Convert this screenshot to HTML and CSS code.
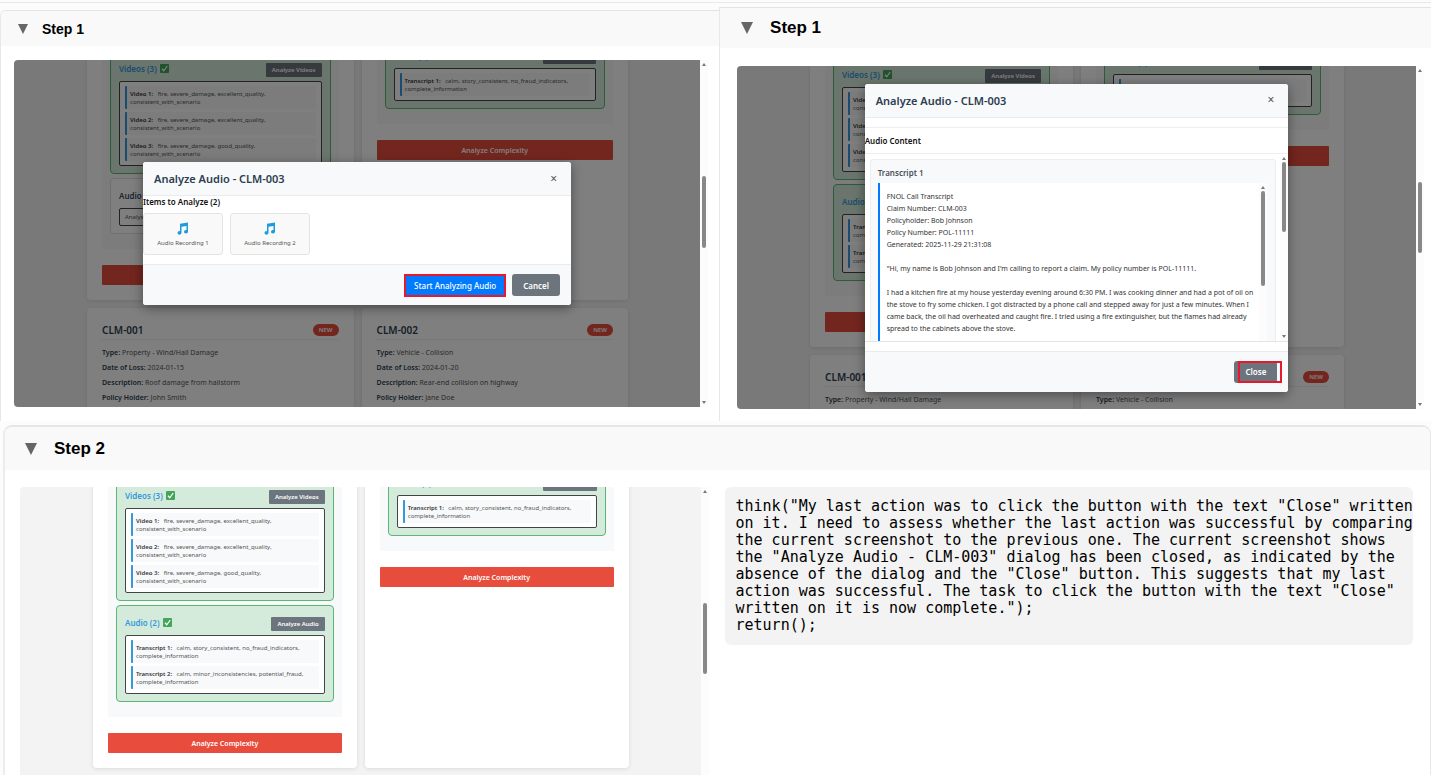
FILE: index.html
```html
<!DOCTYPE html>
<html lang="en">
<head>
<meta charset="utf-8">
<title>Agent Steps</title>
<link rel="stylesheet" href="styles.css">
</head>
<body>
<svg class="defs" width="0" height="0" aria-hidden="true">
  <symbol id="check" viewBox="0 0 18 18">
    <rect width="18" height="18" rx="2" fill="#43a55a"/>
    <path d="M4 9.5l3.5 4L14.5 4" fill="none" stroke="#fff" stroke-width="2.4"/>
  </symbol>
  <symbol id="note" viewBox="0 0 24 26">
    <path d="M7 3.5L23 1v18.500a4 3.500 0 1 1-3-3.300V8L10 9.500v12.200a4 3.500 0 1 1-3-3.300z" fill="#1e9bdc"/>
  </symbol>
  <symbol id="toggle" viewBox="0 0 12 12">
    <path d="M0 0h12L6 12z" fill="#666"/>
  </symbol>
  <symbol id="up" viewBox="0 0 4 3"><path d="M0 3h4L2 0z" fill="#777"/></symbol>
  <symbol id="down" viewBox="0 0 4 3"><path d="M0 0h4L2 3z" fill="#777"/></symbol>
</svg>

<div class="top-row">
  <section class="step step-small">
    <h2 class="step-title"><svg><use href="#toggle"/></svg>Step 1</h2>
    <div class="shot">
      <div class="page">
        <div class="claims">
          <div class="claim">
            <div class="evidence evidence-first">
              <div class="group done">
                <div class="group-head"><h4>Videos (3) <svg><use href="#check"/></svg></h4><button>Analyze Videos</button></div>
                <div class="tags">
                  <p><b>Video 1:</b> fire, severe_damage, excellent_quality, consistent_with_scenario</p>
                  <p><b>Video 2:</b> fire, severe_damage, excellent_quality, consistent_with_scenario</p>
                  <p><b>Video 3:</b> fire, severe_damage, good_quality, consistent_with_scenario</p>
                </div>
              </div>
              <div class="group">
                <div class="group-head"><h4>Audio (2)</h4><button>Analyze Audio</button></div>
                <div class="pending">Analysis pending</div>
              </div>
            </div>
            <button class="complexity">Analyze Complexity</button>
          </div>
          <div class="claim">
            <div class="evidence">
              <div class="group done">
                <div class="group-head"><h4>Audio (1) <svg><use href="#check"/></svg></h4><button>Analyze Audio</button></div>
                <div class="tags">
                  <p><b>Transcript 1:</b> calm, story_consistent, no_fraud_indicators, complete_information</p>
                </div>
              </div>
            </div>
            <button class="complexity">Analyze Complexity</button>
          </div>
          <div class="claim">
            <div class="claim-head"><h3>CLM-001</h3><span class="badge">NEW</span></div>
            <p class="field"><b>Type:</b> Property - Wind/Hail Damage</p>
            <p class="field"><b>Date of Loss:</b> 2024-01-15</p>
            <p class="field"><b>Description:</b> Roof damage from hailstorm</p>
            <p class="field"><b>Policy Holder:</b> John Smith</p>
          </div>
          <div class="claim">
            <div class="claim-head"><h3>CLM-002</h3><span class="badge">NEW</span></div>
            <p class="field"><b>Type:</b> Vehicle - Collision</p>
            <p class="field"><b>Date of Loss:</b> 2024-01-20</p>
            <p class="field"><b>Description:</b> Rear-end collision on highway</p>
            <p class="field"><b>Policy Holder:</b> Jane Doe</p>
          </div>
        </div>
        <div class="overlay">
          <div class="modal">
            <div class="modal-head"><h3>Analyze Audio - CLM-003</h3><button class="close" aria-label="Close dialog">×</button></div>
            <div class="items-body">
              <h4>Items to Analyze (2)</h4>
              <div class="items">
                <div class="item"><svg><use href="#note"/></svg>Audio Recording 1</div>
                <div class="item"><svg><use href="#note"/></svg>Audio Recording 2</div>
              </div>
            </div>
            <div class="modal-foot">
              <span class="target"><button class="btn primary">Start Analyzing Audio</button><i class="marker"></i></span>
              <button class="btn">Cancel</button>
            </div>
          </div>
        </div>
      </div>
      <div class="scrollbar"><svg><use href="#up"/></svg><i class="thumb"></i><svg><use href="#down"/></svg></div>
    </div>
  </section>

  <section class="step step-right">
    <h2 class="step-title"><svg><use href="#toggle"/></svg>Step 1</h2>
    <div class="shot">
      <div class="page">
        <div class="claims">
          <div class="claim">
            <div class="evidence evidence-first">
              <div class="group done">
                <div class="group-head"><h4>Videos (3) <svg><use href="#check"/></svg></h4><button>Analyze Videos</button></div>
                <div class="tags">
                  <p><b>Video 1:</b> fire, severe_damage, excellent_quality, consistent_with_scenario</p>
                  <p><b>Video 2:</b> fire, severe_damage, excellent_quality, consistent_with_scenario</p>
                  <p><b>Video 3:</b> fire, severe_damage, good_quality, consistent_with_scenario</p>
                </div>
              </div>
              <div class="group done">
                <div class="group-head"><h4>Audio (2) <svg><use href="#check"/></svg></h4><button>Analyze Audio</button></div>
                <div class="tags">
                  <p><b>Transcript 1:</b> calm, story_consistent, no_fraud_indicators, complete_information</p>
                  <p><b>Transcript 2:</b> calm, minor_inconsistencies, potential_fraud, complete_information</p>
                </div>
              </div>
            </div>
            <button class="complexity">Analyze Complexity</button>
          </div>
          <div class="claim">
            <div class="evidence">
              <div class="group done">
                <div class="group-head"><h4>Audio (1) <svg><use href="#check"/></svg></h4><button>Analyze Audio</button></div>
                <div class="tags">
                  <p><b>Transcript 1:</b> calm, story_consistent, no_fraud_indicators, complete_information</p>
                </div>
              </div>
            </div>
            <button class="complexity">Analyze Complexity</button>
          </div>
          <div class="claim">
            <div class="claim-head"><h3>CLM-001</h3><span class="badge">NEW</span></div>
            <p class="field"><b>Type:</b> Property - Wind/Hail Damage</p>
            <p class="field"><b>Date of Loss:</b> 2024-01-15</p>
          </div>
          <div class="claim">
            <div class="claim-head"><h3>CLM-002</h3><span class="badge">NEW</span></div>
            <p class="field"><b>Type:</b> Vehicle - Collision</p>
            <p class="field"><b>Date of Loss:</b> 2024-01-20</p>
          </div>
        </div>
        <div class="overlay">
          <div class="modal">
            <div class="modal-head"><h3>Analyze Audio - CLM-003</h3><button class="close" aria-label="Close dialog">×</button></div>
            <div class="content-body">
              <h4>Audio Content</h4>
              <div class="scroller">
                <div class="transcript">
                  <h5>Transcript 1</h5>
                  <div class="transcript-box">
                    <div class="transcript-text">FNOL Call Transcript
Claim Number: CLM-003
Policyholder: Bob Johnson
Policy Number: POL-11111
Generated: 2025-11-29 21:31:08

"Hi, my name is Bob Johnson and I'm calling to report a claim. My policy number is POL-11111.

I had a kitchen fire at my house yesterday evening around 6:30 PM. I was cooking dinner and had a pot of oil on
the stove to fry some chicken. I got distracted by a phone call and stepped away for just a few minutes. When I
came back, the oil had overheated and caught fire. I tried using a fire extinguisher, but the flames had already
spread to the cabinets above the stove.</div>
                    <div class="scrollbar inner"><svg><use href="#up"/></svg><i class="thumb"></i></div>
                  </div>
                </div>
                <div class="scrollbar outer"><svg><use href="#up"/></svg><i class="thumb"></i><svg><use href="#down"/></svg></div>
              </div>
            </div>
            <div class="modal-foot">
              <span class="target"><button class="btn">Close</button><i class="marker marker-shifted"></i></span>
            </div>
          </div>
        </div>
      </div>
      <div class="scrollbar"><svg><use href="#up"/></svg><i class="thumb"></i><svg><use href="#down"/></svg></div>
    </div>
  </section>
</div>

<section class="step step-wide">
  <h2 class="step-title"><svg><use href="#toggle"/></svg>Step 2</h2>
  <div class="columns">
    <div class="shot">
      <div class="page">
        <div class="claims">
          <div class="claim">
            <div class="evidence evidence-first">
              <div class="group done">
                <div class="group-head"><h4>Videos (3) <svg><use href="#check"/></svg></h4><button>Analyze Videos</button></div>
                <div class="tags">
                  <p><b>Video 1:</b> fire, severe_damage, excellent_quality, consistent_with_scenario</p>
                  <p><b>Video 2:</b> fire, severe_damage, excellent_quality, consistent_with_scenario</p>
                  <p><b>Video 3:</b> fire, severe_damage, good_quality, consistent_with_scenario</p>
                </div>
              </div>
              <div class="group done">
                <div class="group-head"><h4>Audio (2) <svg><use href="#check"/></svg></h4><button>Analyze Audio</button></div>
                <div class="tags">
                  <p><b>Transcript 1:</b> calm, story_consistent, no_fraud_indicators, complete_information</p>
                  <p><b>Transcript 2:</b> calm, minor_inconsistencies, potential_fraud, complete_information</p>
                </div>
              </div>
            </div>
            <button class="complexity">Analyze Complexity</button>
          </div>
          <div class="claim">
            <div class="evidence">
              <div class="group done">
                <div class="group-head"><h4>Audio (1) <svg><use href="#check"/></svg></h4><button>Analyze Audio</button></div>
                <div class="tags">
                  <p><b>Transcript 1:</b> calm, story_consistent, no_fraud_indicators, complete_information</p>
                </div>
              </div>
            </div>
            <button class="complexity">Analyze Complexity</button>
          </div>
        </div>
      </div>
      <div class="scrollbar"><svg><use href="#up"/></svg><i class="thumb"></i><svg><use href="#down"/></svg></div>
    </div>
    <pre class="code">think("My last action was to click the button with the text "Close" written
on it. I need to assess whether the last action was successful by comparing
the current screenshot to the previous one. The current screenshot shows
the "Analyze Audio - CLM-003" dialog has been closed, as indicated by the
absence of the dialog and the "Close" button. This suggests that my last
action was successful. The task to click the button with the text "Close"
written on it is now complete.");
return();</pre>
  </div>
</section>
</body>
</html>
```
FILE: styles.css
```css
* {
    box-sizing: border-box;
}

body {
    display: flex;
    flex-direction: column;
    margin: 0;
    height: 100vh;
    overflow: hidden;
    background-color: #fcfcfc;
    font-family: "Noto Sans", sans-serif;
    color: #222;
}

h2, h3, h4, h5, p, pre {
    margin: 0;
}

button {
    font-family: inherit;
    border: none;
    padding: 0;
    cursor: pointer;
}

.defs {
    display: block;
    flex: none;
}

/* step panels */
.top-row {
    flex: none;
    display: grid;
    grid-template-columns: 1.01fr 1fr;
    margin-top: 2px;
    border-top: 1px solid #e8e8e8;
    padding-top: 4px;
}

.step {
    min-width: 0;
    background-color: #fff;
    border-top: 1px solid #e4e4e4;
    border-left: 1px solid #e8e8e8;
}

.step-title {
    display: flex;
    align-items: center;
    height: 40px;
    padding-left: 20px;
    gap: 17px;
    background-color: #f9f9f9;
    font: bold 17px "Liberation Sans", Arial, sans-serif;
    color: #000;
}

.step-title svg {
    width: 12px;
    height: 12px;
}

.step-small {
    margin-top: 3px;
    border-top-left-radius: 6px;
    overflow: hidden;
}

.step-small .step-title {
    height: 35px;
    padding-left: 17px;
    gap: 14px;
    font-size: 14px;
}

.step-small .step-title svg {
    width: 10px;
    height: 10px;
}

.step-small .shot {
    margin: 14px 11px 14px 13px;
}

.step-right .step-title {
    padding-left: 21px;
}

.step-right .shot {
    margin: 18px 7px 11px 17px;
}

.step-wide {
    flex: 1;
    min-height: 0;
    margin: 4px 0 0 3px;
    border-top: 2px solid #e6e6e6;
    border-left: 2px solid #ececec;
    border-right: 1px solid #e8e8e8;
    border-radius: 9px 9px 0 0;
    overflow: hidden;
}

.step-wide .step-title {
    height: 43px;
}

.columns {
    display: grid;
    grid-template-columns: minmax(0, 1fr) minmax(0, 1fr);
    gap: 16px;
    padding: 17px 17px 17px 15px;
    align-items: start;
}

.code {
    padding: 11px 0 11px 11px;
    border-radius: 6px;
    background-color: #f3f3f3;
    font: 15px/17px "DejaVu Sans Mono", monospace;
    color: #000;
}

/* captured browser window */
.shot {
    display: flex;
    aspect-ratio: 2 / 1;
    min-width: 0;
    border-radius: 4px 0 0 4px;
    overflow: hidden;
}

.page {
    position: relative;
    flex: 1;
    min-width: 0;
    overflow: hidden;
    background-color: #f3f3f3;
}

.scrollbar {
    width: 8px;
    flex: none;
    display: flex;
    flex-direction: column;
    align-items: center;
    padding: 3px 0;
    background-color: #fcfcfc;
}

.scrollbar svg {
    width: 4px;
    height: 3px;
}

.thumb {
    width: 4px;
    height: 21%;
    margin: 110px 0 auto;
    border-radius: 2px;
    background-color: #888;
}

/* claims list, scrolled part of the way down */
.claims {
    display: grid;
    grid-template-columns: 1fr 1fr;
    gap: 8px;
    margin: -37px 72px 0 73px;
}

.claim {
    min-width: 0;
    padding: 15px;
    border-radius: 4px;
    background-color: #fff;
    box-shadow: 0 1px 4px rgba(0, 0, 0, 0.1);
}

.evidence {
    padding: 0 8px 15px;
    background-color: #f8f9fa;
}

.evidence-first {
    padding-top: 13px;
}

.group {
    margin-bottom: 4px;
    padding: 11px 8px 7px;
    border: 1px solid #ddd;
    border-radius: 4px;
    background-color: #fff;
}

.group:last-child {
    margin-bottom: 0;
}

.group.done {
    border-color: #5ab874;
    background-color: #d4ebdb;
}

.group-head {
    display: flex;
    align-items: flex-start;
    justify-content: space-between;
    height: 18px;
}

.group-head h4 {
    display: flex;
    align-items: center;
    gap: 3px;
    font-size: 8px;
    line-height: 11px;
    font-weight: 600;
    color: #34495e;
}

.done h4 {
    color: #3498db;
}

.group-head svg {
    width: 9px;
    height: 9px;
}

.group-head button {
    height: 14px;
    padding: 0 6px;
    border-radius: 1px;
    background-color: #6c757d;
    color: #fff;
    font-size: 6px;
    font-weight: 600;
}

.tags {
    display: flex;
    flex-direction: column;
    gap: 3px;
    padding: 4px 5px;
    border: 1px solid #444;
    border-radius: 2px;
    background-color: #fff;
}

.tags p {
    padding: 4px 3px 3px;
    border-left: 2px solid #3498db;
    border-radius: 1px;
    background-color: #f8f9fa;
    font-size: 6px;
    line-height: 8px;
    color: #555;
}

.tags b {
    margin-right: 3px;
    font-weight: 600;
    color: #333;
}

.pending {
    padding: 4px 5px;
    border: 1px solid #444;
    border-radius: 2px;
    font-size: 6px;
    line-height: 8px;
    color: #555;
}

.complexity {
    display: block;
    width: 100%;
    height: 20px;
    margin-top: 16px;
    border-radius: 1px;
    background-color: #e74c3c;
    color: #fff;
    font-size: 7px;
    font-weight: 600;
}

.claim-head {
    display: flex;
    align-items: center;
    justify-content: space-between;
    height: 17px;
    margin-bottom: 5px;
    padding-bottom: 3px;
    border-bottom: 1px solid #ecf0f1;
}

.claim-head h3 {
    font-size: 10px;
    font-weight: 600;
    color: #2c3e50;
}

.badge {
    padding: 0 6px;
    border-radius: 6px;
    background-color: #e74c3c;
    color: #fff;
    font-size: 6px;
    line-height: 12px;
    font-weight: 600;
}

.field {
    font-size: 7px;
    line-height: 15px;
    color: #555;
}

.field b {
    font-weight: 600;
    color: #2c3e50;
}

/* dialogs */
.overlay {
    position: absolute;
    inset: 0;
    display: flex;
    align-items: center;
    justify-content: center;
    background-color: rgba(0, 0, 0, 0.5);
}

.modal {
    width: 62.4%;
    border-radius: 3px;
    background-color: #fff;
    box-shadow: 0 3px 12px rgba(0, 0, 0, 0.4);
}

.modal-head {
    display: flex;
    align-items: center;
    justify-content: space-between;
    height: 34px;
    padding: 0 14px 0 11px;
    border-bottom: 1px solid #e9ecef;
    border-radius: 3px 3px 0 0;
    background-color: #f8f9fa;
}

.modal-head h3 {
    font-size: 11px;
    font-weight: 600;
    color: #2c3e50;
}

.close {
    background: none;
    color: #555;
    font-size: 12px;
    line-height: 14px;
}

.modal h4 {
    font-size: 8px;
    line-height: 12px;
    font-weight: 600;
    color: #111;
}

.items {
    display: flex;
    gap: 7px;
    padding: 5px 0 9px;
}

.item {
    display: flex;
    flex-direction: column;
    align-items: center;
    gap: 3px;
    width: 80px;
    padding: 8px 0 6px;
    border: 1px solid #e4e4e4;
    border-radius: 3px;
    background-color: #f9f9f9;
    color: #555;
    font-size: 6px;
    line-height: 10px;
}

.item svg {
    width: 13px;
    height: 13px;
}

.modal-foot {
    display: flex;
    justify-content: flex-end;
    gap: 6px;
    padding: 9px 11px;
    border-top: 1px solid #e9ecef;
    border-radius: 0 0 3px 3px;
    background-color: #f8f9fa;
}

.btn {
    display: block;
    height: 22px;
    padding: 0 11px;
    border-radius: 3px;
    background-color: #6c757d;
    color: #fff;
    font-size: 8px;
    font-weight: 600;
}

.primary {
    padding: 0 10px;
    background-color: #007bff;
    font-weight: 500;
}

.target {
    position: relative;
}

.marker {
    position: absolute;
    inset: 0 0 -1px;
    border: 2px solid #e8192c;
}

.marker-shifted {
    inset: 0 -5px 0 4px;
}

.content-body {
    padding: 9px 0;
}

.content-body h4 {
    padding: 7px 0 6px;
    border-top: 1px solid #eee;
    border-bottom: 1px solid #eee;
}

.scroller {
    display: flex;
    height: 188px;
    padding-left: 5px;
    border-bottom: 1px solid #e4e4e4;
    overflow: hidden;
}

.transcript {
    flex: 1;
    min-width: 0;
    margin: 5px 4px 0 0;
    padding: 7px 8px 0 7px;
    border: 1px solid #eee;
    border-bottom: none;
    border-radius: 3px 3px 0 0;
    background-color: #f8f9fa;
}

.transcript h5 {
    font-size: 8px;
    line-height: 12px;
    font-weight: 600;
    color: #495057;
}

.transcript-box {
    display: flex;
    margin-top: 4px;
    height: 160px;
    border-left: 2px solid #007bff;
    background-color: #fff;
}

.transcript-text {
    flex: 1;
    padding: 8px 0 0 7px;
    white-space: pre;
    font-size: 7px;
    line-height: 12px;
    color: #333;
}

.inner .thumb {
    height: 95px;
    margin-top: 2px;
}

.outer .thumb {
    height: 70px;
    margin-top: 2px;
}
```
